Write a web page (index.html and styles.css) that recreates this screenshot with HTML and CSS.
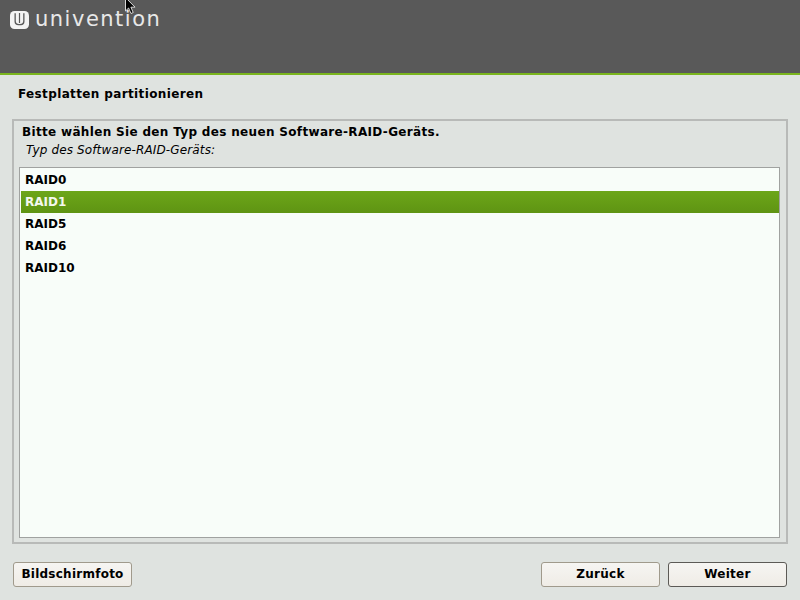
FILE: index.html
```html
<!DOCTYPE html>
<html lang="de">
<head>
<meta charset="utf-8">
<title>Festplatten partitionieren</title>
<link rel="stylesheet" href="styles.css">
</head>
<body>
<div class="screen">
  <header class="banner">
    <div class="logo">
      <svg class="logo-mark" width="19" height="19" viewBox="0 0 19 19" aria-hidden="true">
        <rect x="0" y="0" width="19" height="18" rx="4.5" fill="#f4f4f4"/>
        <path d="M4.5 2.2V10.5C4.5 13 6 14.3 8.5 14.3H11C13 14.3 14.5 13 14.5 10.5V2.2H13.2V10C13.2 12 12 13 10 13H9C7 13 5.8 12 5.8 10V2.2Z" fill="#595959"/>
        <path d="M9.5 2V12" stroke="#595959" stroke-width="1.2" fill="none"/>
      </svg>
      <span class="logo-text">univention</span>
    </div>
    <svg class="cursor" width="12" height="18" viewBox="0 0 12 18" aria-hidden="true">
      <path d="M0.5 0.5V14L3.6 11L6 16.5L8.2 15.5L5.9 10.2H10Z" fill="#000" stroke="#fff" stroke-width="0.8"/>
    </svg>
  </header>
  <h1 class="title">Festplatten partitionieren</h1>
  <main class="panel">
    <p class="question">Bitte wählen Sie den Typ des neuen Software-RAID-Geräts.</p>
    <p class="hint">Typ des Software-RAID-Geräts:</p>
    <ul class="list">
      <li class="row">RAID0</li>
      <li class="row selected">RAID1</li>
      <li class="row">RAID5</li>
      <li class="row">RAID6</li>
      <li class="row">RAID10</li>
    </ul>
  </main>
  <footer class="actions">
    <button class="btn">Bildschirmfoto</button>
    <div class="nav">
      <button class="btn">Zurück</button>
      <button class="btn default">Weiter</button>
    </div>
  </footer>
</div>
</body>
</html>
```
FILE: styles.css
```css
* { box-sizing: border-box; }
html, body { margin: 0; padding: 0; }
body { font-family: "DejaVu Sans", sans-serif; color: #000; }
.screen {
  width: 800px;
  height: 600px;
  background: #dfe3e0;
  display: flex;
  flex-direction: column;
  overflow: hidden;
}
.banner {
  position: relative;
  height: 75px;
  flex: none;
  background: #595959;
  border-bottom: 2px solid #7ab51d;
  padding: 11px 0 0 10px;
}
.logo { display: flex; align-items: flex-start; gap: 6px; height: 19px; }
.logo-mark { display: block; }
.logo-text {
  font-family: "DejaVu Sans", sans-serif;
  font-weight: 400;
  font-size: 21px;
  letter-spacing: 1.5px;
  color: #e8e8e8;
  line-height: 16px;
}
.cursor { position: absolute; left: 125px; top: 0; margin-top: -3px; }
.title {
  margin: 0;
  padding: 11px 0 0 18px;
  height: 44px;
  flex: none;
  font-size: 12px;
  font-weight: bold;
  line-height: 16px;
  letter-spacing: 0.37px;
}
.panel {
  flex: none;
  height: 425px;
  margin: 0 12px;
  border: 2px solid #b8bab8;
  padding: 3px 6px 4px 5px;
  display: flex;
  flex-direction: column;
}
.question {
  margin: 0 0 2px 3px;
  font-size: 12px;
  font-weight: bold;
  line-height: 16px;
  letter-spacing: 0.33px;
}
.hint {
  margin: 0 0 9px 7px;
  font-size: 12px;
  font-style: italic;
  line-height: 16px;
  letter-spacing: 0.14px;
}
.list {
  list-style: none;
  margin: 0;
  padding: 1px 0 1px 1px;
  flex: 1;
  background: #f8fdf9;
  border: 1px solid #a0a2a0;
}
.row {
  height: 22px;
  padding: 0 4px;
  font-size: 12px;
  font-weight: bold;
  line-height: 22px;
}
.selected {
  background: linear-gradient(#6ca619, #5f9413);
  color: #f4f8ee;
}
.actions {
  flex: 1;
  display: flex;
  justify-content: space-between;
  padding: 18px 13px 0 13px;
}
.nav { display: flex; gap: 8px; }
.btn {
  width: 119px;
  height: 25px;
  padding: 0 0 2px;
  font-family: "DejaVu Sans", sans-serif;
  font-size: 12px;
  font-weight: bold;
  letter-spacing: 0.25px;
  color: #000;
  background: linear-gradient(#f6f5f2, #efece6);
  border: 1px solid #a09a8c;
  border-radius: 3px;
}
.default { border-color: #5c5a56; }
```
